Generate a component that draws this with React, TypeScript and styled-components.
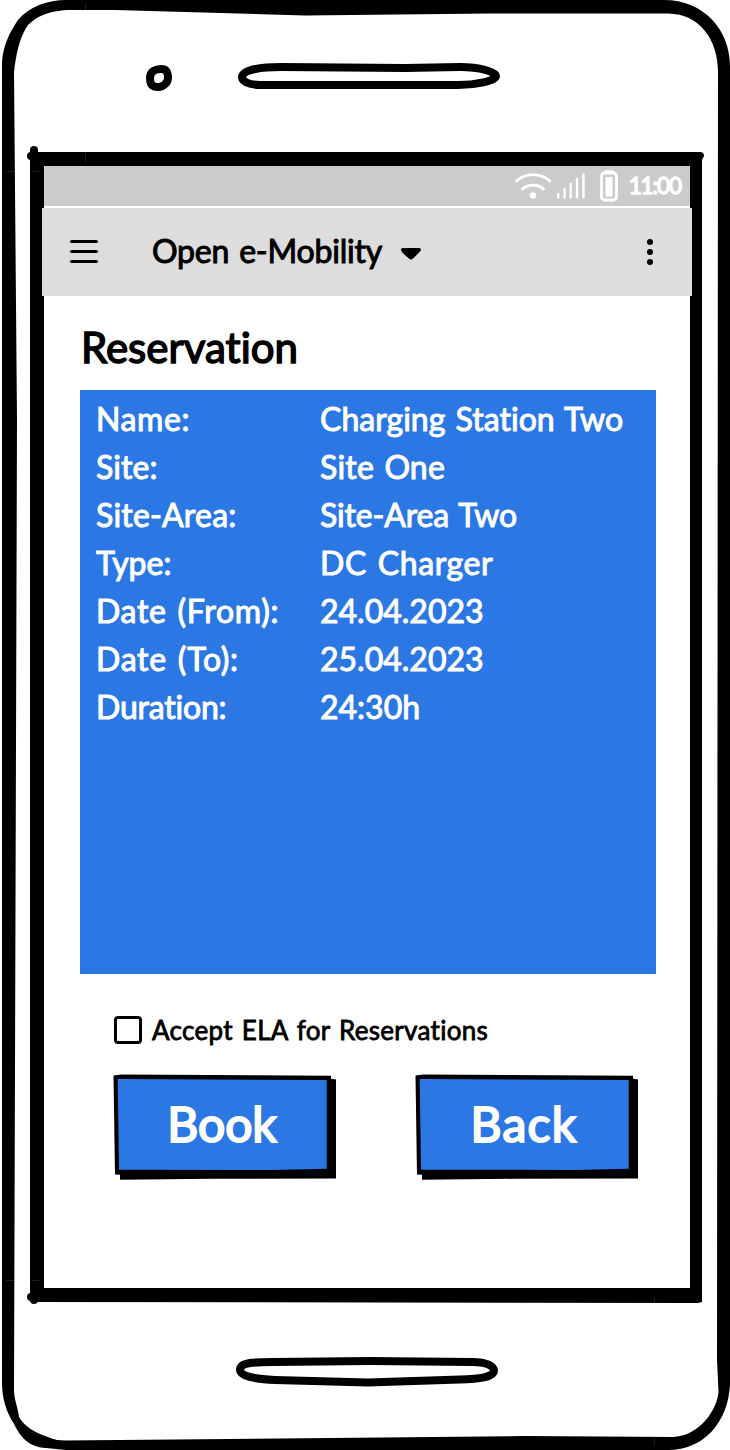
import React from 'react';
import styled, { createGlobalStyle } from 'styled-components';

const Global = createGlobalStyle`
  * { box-sizing: border-box; }
  body { margin: 0; background: #fff; font-family: Lato, "Open Sans", sans-serif; }
`;

const Device = styled.main`
  position: relative;
  width: 730px;
  height: 1450px;
  padding: 166px 40px 162px 44px;
  overflow: hidden;
  background: #fff;
`;

const Casing = styled.svg`
  position: absolute;
  inset: 0;
  display: block;
`;

const Screen = styled.div`
  position: relative;
  height: 1122px;
  display: flex;
  flex-direction: column;
`;

const StatusBar = styled.div`
  height: 40px;
  flex: none;
  display: flex;
  align-items: center;
  justify-content: flex-end;
  gap: 8px;
  padding-right: 9px;
  background: #cbcbcb;
  color: #fff;
`;

const AppBar = styled.header`
  height: 88px;
  flex: none;
  margin: 2px -2px 0;
  padding: 0 36px 0 28px;
  display: flex;
  align-items: center;
  background: #ddd;
`;

const Text = styled.span<{ $size: number; $spacing?: number; $bold?: number }>`
  font-size: ${p => p.$size}px;
  font-weight: 400;
  line-height: 1;
  letter-spacing: ${p => p.$spacing ?? 0}px;
  word-spacing: 2px;
  font-variant-ligatures: none;
  -webkit-text-stroke: ${p => p.$bold ?? 1}px currentColor;
  white-space: nowrap;
`;

const TitleSlot = styled.div`
  margin-left: 54px;
  padding-bottom: 3px;
  width: 249px;
`;

const Caret = styled.svg`
  margin-top: 4px;
`;

const MoreIcon = styled.svg`
  margin-left: auto;
`;

const Content = styled.section`
  padding: 30px 34px 0 36px;
  display: flex;
  flex-direction: column;
`;

const Heading = styled.h1`
  margin: 0;
  height: 64px;
  padding-left: 1px;
  line-height: 1;
`;

const Card = styled.dl`
  margin: 0;
  height: 584px;
  padding: 5px 16px;
  background: #2b78e4;
  color: #fff;
`;

const Row = styled.div`
  display: grid;
  grid-template-columns: 224px 1fr;
  height: 48px;
  align-items: center;
`;

const Term = styled.dt`
  display: flex;
`;

const Value = styled.dd`
  display: flex;
  margin: 0;
`;

const Accept = styled.label`
  display: flex;
  align-items: center;
  gap: 10px;
  margin: 42px 0 0 34px;
  height: 28px;
`;

const Box = styled.i`
  width: 28px;
  height: 28px;
  border: 3px solid #000;
  border-radius: 4px;
`;

const Actions = styled.div`
  display: flex;
  gap: 79px;
  margin: 30px 0 0 33px;
`;

const ButtonBase = styled.button`
  position: relative;
  width: 223px;
  height: 106px;
  padding: 0 5px 7px 0;
  border: 0;
  background: none;
  color: #fff;
  font-family: inherit;
`;

const ButtonShape = styled.svg`
  position: absolute;
  inset: 0;
`;

const ButtonLabel = styled.span`
  position: relative;
`;

function SketchButton({ label, spacing }: { label: string; spacing: number }) {
  return (
    <ButtonBase>
      <ButtonShape width="223" height="106" viewBox="0 0 223 106">
        <path d="M0.5 1.5 L8 0.5 L218 1.8 V4.7 L223 5.5 V104.5 L100 104.8 L7 105.8 V100.8 L2 100.5Z" />
        <path d="M4.7 5 L213.7 6 V94.7 L160 96 L6 95.7Z" fill="#2b78e4" />
      </ButtonShape>
      <ButtonLabel><Text $size={48} $spacing={spacing} $bold={2}>{label}</Text></ButtonLabel>
    </ButtonBase>
  );
}

const rows = [
  { k: 'Name:', ks: 0.6, v: 'Charging Station Two', vs: 0.02 },
  { k: 'Site:', ks: 0.1, v: 'Site One', vs: 0.2 },
  { k: 'Site-Area:', ks: 0.2, v: 'Site-Area Two', vs: -0.15 },
  { k: 'Type:', ks: 0, v: 'DC Charger', vs: 0.6 },
  { k: 'Date (From):', ks: 0.7, v: '24.04.2023', vs: 0 },
  { k: 'Date (To):', ks: 0.75, v: '25.04.2023', vs: 0 },
  { k: 'Duration:', ks: -0.2, v: '24:30h', vs: 0 },
];

export default function App() {
  return (
    <>
      <Global />
      <Device>
        <Casing width="730" height="1450" viewBox="0 0 730 1450">
          <path
            fillRule="evenodd"
            d="M2 62 C3 45 10 32 18 20 C30 6 48 0 66 0 H664 C704 0 730 30 730 66 V1385 C728 1422 704 1450 668 1450 H66 L46 1448 C28 1447 20 1436 14 1424 C5 1410 2 1396 2 1382Z
               M14 72 C16 55 19 40 26 28 C34 16 52 10 70 10 H115 L305 15.5 L490 13.5 H668 C700 14 718 40 718 72 L717 1360 L718.5 1392 C717 1410 700 1435 674 1437 L525 1436 L65 1440.5 L57 1440 C44 1436 26 1430 19 1417 C18 1407 14 1400 14 1390 L17 421Z"
          />
          <path fillRule="evenodd" d="M30 152 H700 Q704 152 704 156 L702 160 V1302 L698 1303 L34 1302 H30Z M44 166 H690 V1288 H44Z" />
          <path d="M34 150 V160 M31 156 H40 M31 1297 H40 M34 1295 V1300" fill="none" stroke="#000" strokeWidth="8" strokeLinecap="round" />
          <path d="M6 171.500 H14 M31 171.500 H39 M6 1280.500 H14 M31 1280.500 H39 M85.500 3 V10 M85.500 153 V162 M654.500 1298 V1303 M654.500 1438 V1446" stroke="#333" strokeWidth="0.600" />
          <path d="M150 78 C150 71 156 69 161 69 C167 69 168 73 168 78 C168 82 164 87 158 87 C152 87 150 84 150 78Z" fill="none" stroke="#000" strokeWidth="8" />
          <path d="M242 77 C243 69 263 67 281 67 L405 68 L460 67 C480 67 496 72 496 76 C496 81 475 85 458 85 H260 C248 85 242 81 242 77Z" fill="none" stroke="#000" strokeWidth="8" />
          <path d="M240 1370 C240 1362 255 1362 273 1362 L370 1361 L472 1362 C487 1362 494 1366 494 1371 C494 1377 479 1379 460 1379.500 L368 1382.500 L275 1380 C254 1379 240 1376 240 1370Z" fill="none" stroke="#000" strokeWidth="8" />
        </Casing>
        <Screen>
          <StatusBar>
            <svg width="108" height="36" viewBox="0 0 108 36" fill="none" stroke="#fff" strokeLinecap="round">
              <path d="M3.500 13 C13 4.500 27 4.500 37 13" strokeWidth="2.800" />
              <path d="M9.500 21 C15 16 25 16 30.500 21" strokeWidth="2.800" />
              <circle cx="20" cy="27.500" r="3.300" fill="#fff" stroke="none" />
              <path d="M45.300 26 V29.500 M51.500 21 V29.500 M57.700 16 V29.500 M64 11 V29.500 M70.500 6.500 V29.500" strokeWidth="2.300" />
              <rect x="88.500" y="5" width="15" height="27" rx="3" strokeWidth="2.800" />
              <path d="M92.500 3.700 H99.500" strokeWidth="3" />
              <rect x="92.500" y="9" width="7" height="19.500" fill="#fff" stroke="none" />
            </svg>
            <Text $size={22.5} $spacing={-1.1} $bold={1.3}>11:00</Text>
          </StatusBar>
          <AppBar>
            <svg width="28" height="24" viewBox="0 0 28 24" stroke="#000" strokeWidth="3" strokeLinecap="round">
              <path d="M1.500 1.500 H26.500 M1.500 11.500 H26.500 M1.500 21.500 H26.500" />
            </svg>
            <TitleSlot><Text $size={32} $spacing={-0.2}>Open e-Mobility</Text></TitleSlot>
            <Caret width="20" height="12" viewBox="0 0 20 12"><path d="M1.500 0 H18.500 Q20 0 20 2 Q19 4 12 10.500 Q10 12.500 8 10.500 Q1 5 0 2 Q0 0 1.500 0Z" /></Caret>
            <MoreIcon width="10" height="28" viewBox="0 0 10 28"><circle cx="4" cy="4" r="3" /><circle cx="4" cy="14" r="3" /><circle cx="4" cy="24" r="3" /></MoreIcon>
          </AppBar>
          <Content>
            <Heading><Text $size={42} $spacing={0} $bold={1.5}>Reservation</Text></Heading>
            <Card>
              {rows.map(r => (
                <Row key={r.k}>
                  <Term><Text $size={32} $spacing={r.ks}>{r.k}</Text></Term>
                  <Value><Text $size={32} $spacing={r.vs}>{r.v}</Text></Value>
                </Row>
              ))}
            </Card>
            <Accept><Box /><Text $size={26} $spacing={0.3} $bold={0.8}>Accept ELA for Reservations</Text></Accept>
            <Actions>
              <SketchButton label="Book" spacing={0} />
              <SketchButton label="Back" spacing={1.3} />
            </Actions>
          </Content>
        </Screen>
      </Device>
    </>
  );
}
